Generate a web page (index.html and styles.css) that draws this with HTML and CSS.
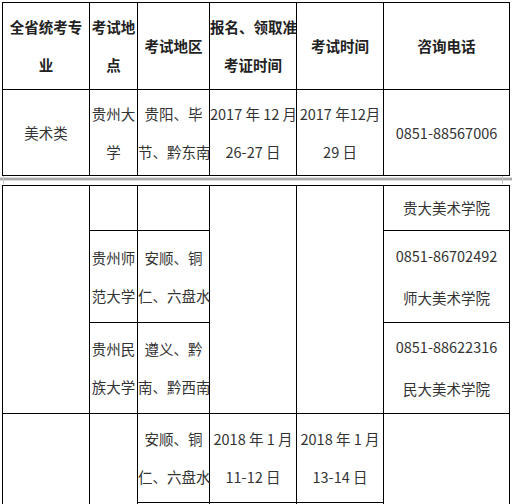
FILE: index.html
```html
<!DOCTYPE html>
<html lang="zh-CN">
<head>
<meta charset="utf-8">
<title>美术类考试安排</title>
<link rel="stylesheet" href="styles.css">
</head>
<body>
<table class="grid">
  <colgroup>
    <col class="c1"><col class="c2"><col class="c3"><col class="c4"><col class="c5"><col class="c6">
  </colgroup>
  <tr class="h87">
    <th>全省统考专<br>业</th>
    <th>考试地<br>点</th>
    <th>考试地区</th>
    <th>报名、领取准<br>考证时间</th>
    <th>考试时间</th>
    <th>咨询电话</th>
  </tr>
  <tr class="h86">
    <td>美术类</td>
    <td>贵州大<br>学</td>
    <td>贵阳、毕<br>节、黔东南</td>
    <td>2017 年 12 月<br>26-27 日</td>
    <td>2017 年12月<br>29 日</td>
    <td>0851-88567006</td>
  </tr>
</table>

<div class="sep">
  <span class="tick tick-l"></span>
  <span class="tick tick-r"></span>
</div>

<table class="grid">
  <colgroup>
    <col class="c1"><col class="c2"><col class="c3"><col class="c4"><col class="c5"><col class="c6">
  </colgroup>
  <tr class="h45">
    <td rowspan="3"></td>
    <td></td>
    <td></td>
    <td rowspan="3"></td>
    <td rowspan="3"></td>
    <td>贵大美术学院</td>
  </tr>
  <tr class="h92">
    <td>贵州师<br>范大学</td>
    <td>安顺、铜<br>仁、六盘水</td>
    <td class="wide">0851-86702492<br>师大美术学院</td>
  </tr>
  <tr class="h91">
    <td>贵州民<br>族大学</td>
    <td>遵义、黔<br>南、黔西南</td>
    <td class="wide">0851-88622316<br>民大美术学院</td>
  </tr>
  <tr class="h89">
    <td rowspan="2"></td>
    <td rowspan="2"></td>
    <td>安顺、铜<br>仁、六盘水</td>
    <td>2018 年 1 月<br>11-12 日</td>
    <td>2018 年 1 月<br>13-14 日</td>
    <td rowspan="2"></td>
  </tr>
  <tr class="h45">
    <td></td>
    <td></td>
    <td></td>
  </tr>
</table>
</body>
</html>
```

FILE: styles.css
```css
html, body {
  margin: 0;
  padding: 0;
  background: #ffffff;
}

body {
  padding: 2px 0 0 2px;
  font-family: "Noto Sans CJK SC", "Microsoft YaHei", sans-serif;
  font-size: 14.5px;
  color: #333333;
}

.grid {
  border-collapse: collapse;
  table-layout: fixed;
  width: 508px;
}

.c1 { width: 87px; }
.c2 { width: 48px; }
.c3 { width: 72px; }
.c4 { width: 87px; }
.c5 { width: 87px; }
.c6 { width: 126px; }

.grid th,
.grid td {
  border: 1px solid #000000;
  padding: 0;
  text-align: center;
  vertical-align: middle;
  white-space: nowrap;
  line-height: 38px;
}

.grid th {
  font-weight: 700;
  color: #222222;
}

.grid td.wide {
  line-height: 42px;
}

.h87 { height: 87px; }
.h86 { height: 86px; }
.h45 { height: 45px; }
.h92 { height: 92px; }
.h91 { height: 91px; }
.h89 { height: 89px; }

.sep {
  position: relative;
  margin: 1px 0 4px -2px;
  width: 512px;
  height: 2px;
  background: #a9a9a9;
  border-top: 1px solid #dcdcdc;
  border-bottom: 1px solid #dcdcdc;
}

.tick {
  position: absolute;
  top: -2px;
  width: 1px;
  height: 8px;
  background: #c8c8c8;
}

.tick-l { left: 3px; }
.tick-r { left: 502px; }
```
